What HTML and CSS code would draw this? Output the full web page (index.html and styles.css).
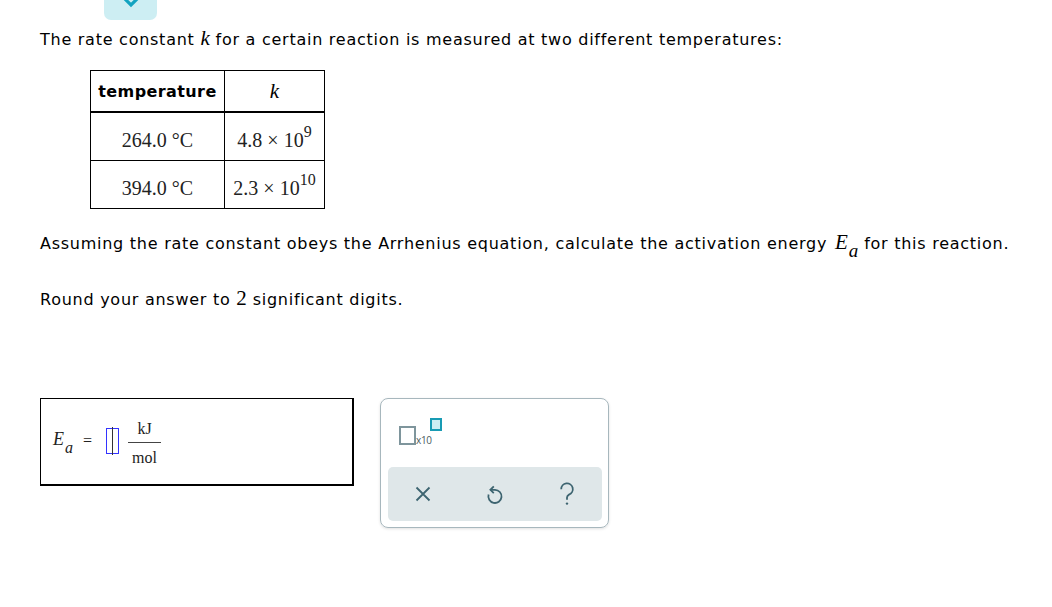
FILE: index.html
```html
<!DOCTYPE html>
<html>
<head>
<meta charset="utf-8">
<link rel="stylesheet" href="styles.css">
</head>
<body>
<div class="page">
  <div class="collapse-tab">
    <svg width="22" height="10" viewBox="0 0 22 10"><path d="M2 -2 L11 7 L20 -2" fill="none" stroke="#12a3c0" stroke-width="3.2"/></svg>
  </div>
  <p class="line first">The rate constant <span class="math k">k</span> for a certain reaction is measured at two different temperatures:</p>
  <table class="data">
    <tr class="head">
      <th class="c1">temperature</th>
      <th class="c2"><span class="math k">k</span></th>
    </tr>
    <tr>
      <td class="c1">264.0 °C</td>
      <td class="c2">4.8 × 10<sup>9</sup></td>
    </tr>
    <tr>
      <td class="c1">394.0 °C</td>
      <td class="c2">2.3 × 10<sup>10</sup></td>
    </tr>
  </table>
  <p class="line second">Assuming the rate constant obeys the Arrhenius equation, calculate the activation energy <span class="math ea">E<sub>a</sub></span> for this reaction.</p>
  <p class="line third">Round your answer to <span class="num">2</span> significant digits.</p>

  <div class="answer-row">
    <div class="answer-box">
      <span class="math ea small">E<sub>a</sub></span>
      <span class="eq">=</span>
      <span class="slot"><span class="cursor"></span></span>
      <span class="frac">
        <span class="top">kJ</span>
        <span class="bar"></span>
        <span class="bottom">mol</span>
      </span>
    </div>
    <div class="toolbox">
      <div class="tools-top">
        <div class="x10">
          <span class="base-sq"></span>
          <span class="x10-text">x10</span>
          <span class="exp-sq"></span>
        </div>
      </div>
      <div class="tools-bottom">
        <svg class="ico" width="18" height="18" viewBox="0 0 18 18"><path d="M2.5 2.5 L15.5 15.5 M15.5 2.5 L2.5 15.5" stroke="#3d6470" stroke-width="1.8" fill="none"/></svg>
        <svg class="ico" width="18" height="22" viewBox="0 0 18 22"><path d="M2.6 11.5 A6.6 6.6 0 1 0 9 6.8 L4.5 6.8" stroke="#3d6470" stroke-width="1.8" fill="none"/><path d="M7.8 3.4 L4.4 6.8 L7.8 10.2" stroke="#3d6470" stroke-width="1.8" fill="none"/></svg>
        <svg class="ico" width="18" height="24" viewBox="0 0 18 24"><path d="M3.2 7.2 A5.8 5.8 0 1 1 11 12.6 C9.6 13.4 9 14.2 9 15.6 L9 17.8" stroke="#3d6470" stroke-width="1.8" fill="none"/><circle cx="9" cy="21.6" r="1.2" fill="#3d6470"/></svg>
      </div>
    </div>
  </div>
</div>
</body>
</html>
```

FILE: styles.css
```css
html, body {
  margin: 0;
  padding: 0;
  background: #ffffff;
}
.page {
  position: relative;
  width: 1052px;
  height: 607px;
  padding-left: 40px;
  box-sizing: border-box;
  font-family: "DejaVu Sans", Verdana, sans-serif;
  font-size: 16px;
  letter-spacing: 0.74px;
  color: #000;
}
.collapse-tab {
  position: absolute;
  left: 104px;
  top: -10px;
  width: 53px;
  height: 30px;
  background: #cdeef3;
  border-radius: 7px;
  display: flex;
  justify-content: center;
  align-items: flex-end;
}
.collapse-tab svg {
  position: relative;
  top: -12px;
}
.line {
  margin: 0;
  line-height: 20px;
}
.first {
  padding-top: 28px;
}
.math {
  font-family: "Liberation Serif", "Times New Roman", serif;
  font-style: italic;
  font-size: 21px;
  letter-spacing: 0;
}
.ea {
  margin-left: 2px;
}
.ea sub {
  font-size: 19px;
  position: relative;
  top: 8px;
  vertical-align: baseline;
  line-height: 0;
  margin-left: 1px;
}
.num {
  font-family: "Liberation Serif", serif;
  font-size: 21px;
  letter-spacing: 0;
}
table.data {
  margin-top: 20px;
  margin-left: 50px;
  border-collapse: collapse;
  border: 1px solid #000;
  letter-spacing: 0;
}
table.data th, table.data td {
  border: 1px solid #000;
  padding: 0;
  text-align: center;
}
table.data tr.head th {
  height: 40px;
  border-bottom: 2px solid #000;
}
table.data th.c1 {
  font-family: "DejaVu Sans", Verdana, sans-serif;
  font-weight: bold;
  font-size: 16px;
  letter-spacing: 0.4px;
  width: 133px;
}
table.data th.c2 {
  width: 99px;
  font-weight: normal;
}
table.data td {
  height: 48px;
  box-sizing: border-box;
  padding-top: 8px;
  font-family: "Liberation Serif", "Times New Roman", serif;
  font-size: 20px;
  color: #222;
}
table.data td sup {
  font-size: 16px;
  vertical-align: 10px;
  line-height: 0;
}
.second {
  margin-top: 23px;
}
.third {
  margin-top: 34px;
}
.answer-row {
  display: flex;
  margin-top: 88px;
  gap: 26px;
  align-items: flex-start;
  letter-spacing: 0;
}
.answer-box {
  width: 314px;
  height: 88px;
  border: 1px solid #000;
  border-right-width: 2px;
  border-bottom-width: 2px;
  display: flex;
  align-items: center;
  padding-left: 10px;
  box-sizing: border-box;
  font-family: "Liberation Serif", serif;
  color: #222;
}
.answer-box .small {
  font-size: 18px;
  position: relative;
  top: -2px;
}
.answer-box .small sub {
  font-size: 16px;
  top: 8px;
}
.eq {
  font-size: 16px;
  margin-left: 10px;
  margin-right: 14px;
}
.slot {
  width: 11px;
  height: 24px;
  border: 1px solid #3333ff;
  display: flex;
  justify-content: center;
}
.cursor {
  width: 1px;
  background: #333;
  height: 28px;
  margin-top: -2px;
}
.frac {
  display: flex;
  flex-direction: column;
  align-items: center;
  margin-left: 9px;
  font-size: 16px;
  position: relative;
  top: 2px;
}
.frac .top {
  line-height: 18px;
}
.frac .bar {
  width: 33px;
  height: 1px;
  background: #444;
  margin: 4px 0 7px;
}
.frac .bottom {
  line-height: 16px;
}
.toolbox {
  width: 229px;
  height: 130px;
  border: 1px solid #a7b7bd;
  border-radius: 8px;
  box-sizing: border-box;
  box-shadow: 0 1px 3px rgba(0,0,0,0.12);
  padding: 0 6px 6px 7px;
  display: flex;
  flex-direction: column;
}
.tools-top {
  height: 68px;
  position: relative;
}
.x10 {
  position: absolute;
  left: 11px;
  top: 19px;
  width: 50px;
  height: 30px;
}
.base-sq {
  position: absolute;
  left: 0;
  top: 8px;
  width: 13px;
  height: 15px;
  border: 2px solid #7e959c;
}
.x10-text {
  position: absolute;
  left: 17px;
  top: 15px;
  font-family: "Open Sans", "DejaVu Sans", sans-serif;
  font-size: 10px;
  color: #4a5b60;
  letter-spacing: -0.3px;
}
.exp-sq {
  position: absolute;
  left: 31px;
  top: 0;
  width: 8px;
  height: 9px;
  border: 2px solid #189bb4;
  background: #cdeef3;
}
.tools-bottom {
  flex: 1;
  background: #dfe7e9;
  border-radius: 5px;
  display: flex;
  justify-content: flex-start;
  align-items: center;
  gap: 54px;
  padding-left: 26px;
}
```
